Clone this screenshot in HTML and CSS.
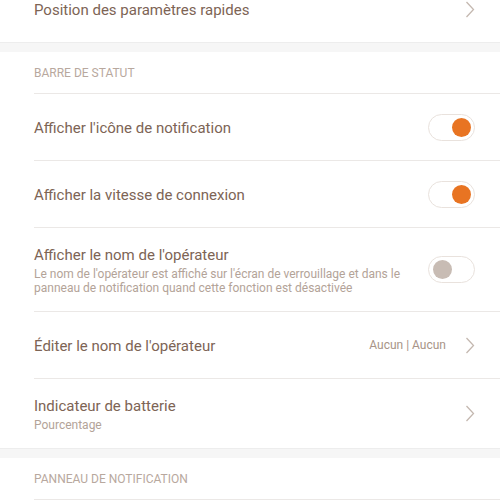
FILE: index.html
```html
<!DOCTYPE html>
<html lang="fr">
<head>
<meta charset="utf-8">
<link rel="stylesheet" href="styles.css">
</head>
<body>
<div class="page">
  <div class="row first">
    <div class="text"><div class="title">Position des paramètres rapides</div></div>
    <svg class="chev" width="10" height="17" viewBox="0 0 10 17"><path d="M1.5 1 L8.5 8.5 L1.5 16" fill="none" stroke="#c4b8b0" stroke-width="1.3"/></svg>
  </div>
  <div class="gap"></div>
  <div class="header">BARRE DE STATUT</div>
  <div class="row">
    <div class="text"><div class="title">Afficher l'icône de notification</div></div>
    <div class="toggle on"><span class="knob"></span></div>
  </div>
  <div class="row">
    <div class="text"><div class="title">Afficher la vitesse de connexion</div></div>
    <div class="toggle on"><span class="knob"></span></div>
  </div>
  <div class="row tall">
    <div class="text">
      <div class="title">Afficher le nom de l'opérateur</div>
      <div class="sub">Le nom de l'opérateur est affiché sur l'écran de verrouillage et dans le panneau de notification quand cette fonction est désactivée</div>
    </div>
    <div class="toggle off"><span class="knob"></span></div>
  </div>
  <div class="row">
    <div class="text"><div class="title">Éditer le nom de l'opérateur</div></div>
    <span class="value">Aucun | Aucun</span>
    <svg class="chev" width="10" height="17" viewBox="0 0 10 17"><path d="M1.5 1 L8.5 8.5 L1.5 16" fill="none" stroke="#c4b8b0" stroke-width="1.3"/></svg>
  </div>
  <div class="row last">
    <div class="text">
      <div class="title">Indicateur de batterie</div>
      <div class="sub">Pourcentage</div>
    </div>
    <svg class="chev" width="10" height="17" viewBox="0 0 10 17"><path d="M1.5 1 L8.5 8.5 L1.5 16" fill="none" stroke="#c4b8b0" stroke-width="1.3"/></svg>
  </div>
  <div class="gap"></div>
  <div class="header">PANNEAU DE NOTIFICATION</div>
</div>
</body>
</html>
```
FILE: styles.css
```css
html, body {
  margin: 0;
  padding: 0;
  background: #ffffff;
  overflow: hidden;
}
body {
  font-family: Roboto, "Noto Sans", sans-serif;
  width: 500px;
  height: 500px;
}
.page {
  display: flex;
  flex-direction: column;
}
.row {
  display: flex;
  align-items: center;
  margin-left: 34px;
  padding-right: 25px;
  height: 66px;
  border-bottom: 1px solid #ebe8e6;
}
.row.first {
  margin-top: -24px;
  border-bottom: none;
}
.row.tall {
  height: 83px;
}
.row.last {
  height: 69px;
  border-bottom: none;
}
.text {
  flex: 1;
  min-width: 0;
  padding-top: 2px;
}
.title {
  font-size: 15px;
  color: #7d6455;
  line-height: 18px;
}
.sub {
  font-size: 12px;
  color: #b3a398;
  line-height: 14.5px;
  margin-top: 3px;
  padding-right: 20px;
}
.value {
  font-size: 12px;
  color: #a89487;
  margin-right: 19px;
}
.chev {
  display: block;
}
.gap {
  height: 9px;
  background: #f6f6f6;
  border-top: 1px solid #ededed;
}
.header {
  margin-left: 34px;
  height: 41px;
  line-height: 42px;
  font-size: 12px;
  color: #b8a89e;
  border-bottom: 1px solid #ebe8e6;
}
.toggle {
  width: 41px;
  height: 25px;
  border: 1px solid #e9e2dd;
  border-radius: 14px;
  background: #fff;
  display: flex;
  align-items: center;
  padding: 0 2px;
  box-sizing: content-box;
}
.toggle.on {
  justify-content: flex-end;
}
.knob {
  width: 19px;
  height: 19px;
  border-radius: 50%;
}
.toggle.on .knob {
  background: #e87422;
  margin-right: 1px;
}
.toggle.off .knob {
  background: #c8bcb4;
  margin-left: 2px;
}
```
